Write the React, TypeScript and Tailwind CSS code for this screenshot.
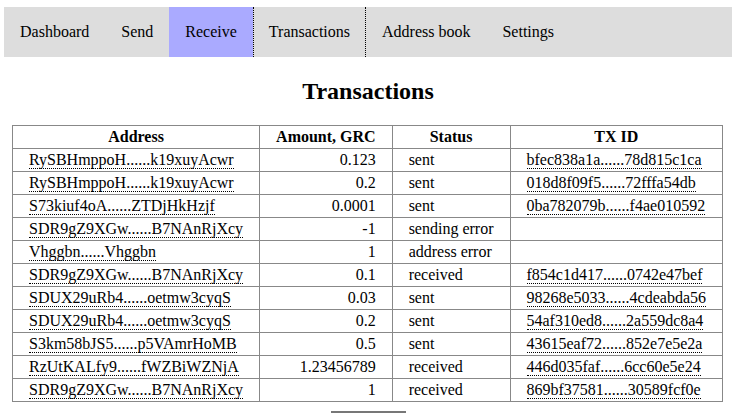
const NAV = ['Dashboard', 'Send', 'Receive', 'Transactions', 'Address book', 'Settings']

const ROWS = [
  { addr: 'RySBHmppoH......k19xuyAcwr', amount: '0.123', status: 'sent', tx: 'bfec838a1a......78d815c1ca' },
  { addr: 'RySBHmppoH......k19xuyAcwr', amount: '0.2', status: 'sent', tx: '018d8f09f5......72fffa54db' },
  { addr: 'S73kiuf4oA......ZTDjHkHzjf', amount: '0.0001', status: 'sent', tx: '0ba782079b......f4ae010592' },
  { addr: 'SDR9gZ9XGw......B7NAnRjXcy', amount: '-1', status: 'sending error', tx: '' },
  { addr: 'Vhggbn......Vhggbn', amount: '1', status: 'address error', tx: '' },
  { addr: 'SDR9gZ9XGw......B7NAnRjXcy', amount: '0.1', status: 'received', tx: 'f854c1d417......0742e47bef' },
  { addr: 'SDUX29uRb4......oetmw3cyqS', amount: '0.03', status: 'sent', tx: '98268e5033......4cdeabda56' },
  { addr: 'SDUX29uRb4......oetmw3cyqS', amount: '0.2', status: 'sent', tx: '54af310ed8......2a559dc8a4' },
  { addr: 'S3km58bJS5......p5VAmrHoMB', amount: '0.5', status: 'sent', tx: '43615eaf72......852e7e5e2a' },
  { addr: 'RzUtKALfy9......fWZBiWZNjA', amount: '1.23456789', status: 'received', tx: '446d035faf......6cc60e5e24' },
  { addr: 'SDR9gZ9XGw......B7NAnRjXcy', amount: '1', status: 'received', tx: '869bf37581......30589fcf0e' },
]

const cell = 'border border-[#888] px-4 py-[2px] leading-[18px] whitespace-nowrap'

export default function App() {
  return (
    <div className="min-h-screen bg-white text-black text-[16px] pt-[7px] font-[Liberation_Serif,Times_New_Roman,serif]">
      <nav className="mx-[4px] flex h-[50px] bg-[#dddddd]">
        {NAV.map(item => (
          <div
            key={item}
            className={`flex items-center px-4 ${
              item === 'Receive' ? 'bg-[#aaaaff]' : ''
            } ${item === 'Transactions' ? 'border-x border-dotted border-black px-[15px]' : ''}`}
          >
            {item}
          </div>
        ))}
      </nav>

      <h2 className="my-[20px] text-center text-[24px] font-bold leading-[28px]">Transactions</h2>

      <table className="ml-[12px] w-[711px] border-collapse border border-[#888]">
        <thead>
          <tr>
            <th className={`${cell} w-[248px] text-center font-bold`}>Address</th>
            <th className={`${cell} w-[132px] text-center font-bold`}>Amount, GRC</th>
            <th className={`${cell} w-[117px] text-center font-bold`}>Status</th>
            <th className={`${cell} text-center font-bold`}>TX ID</th>
          </tr>
        </thead>
        <tbody>
          {ROWS.map((r, i) => (
            <tr key={i}>
              <td className={`${cell} text-left`}>
                <span className="border-b border-dotted border-black">{r.addr}</span>
              </td>
              <td className={`${cell} text-right`}>{r.amount}</td>
              <td className={`${cell} text-left`}>{r.status}</td>
              <td className={`${cell} text-left`}>
                {r.tx && <span className="border-b border-dotted border-black">{r.tx}</span>}
              </td>
            </tr>
          ))}
        </tbody>
      </table>

      <div className="mt-[9px] flex justify-center">
        <div className="h-[10px] w-[75px] border-t-2 border-t-[#777]" />
      </div>
    </div>
  )
}
